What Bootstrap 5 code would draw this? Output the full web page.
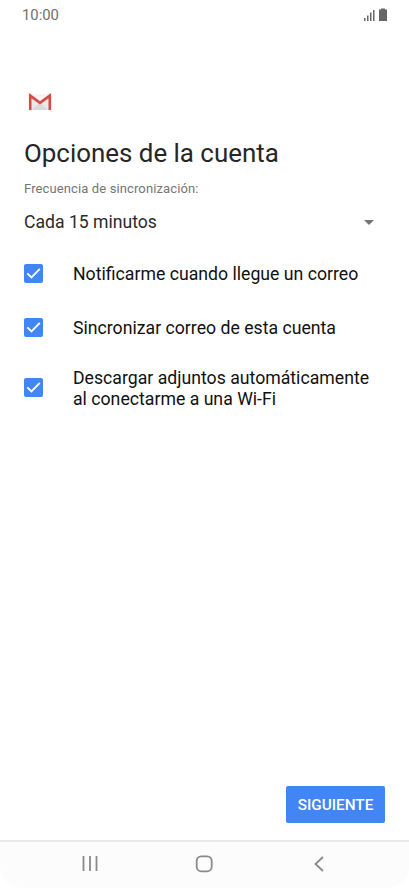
<!DOCTYPE html>
<html lang="es">
<head>
<meta charset="utf-8">
<meta name="viewport" content="width=device-width, initial-scale=1">
<title>Opciones de la cuenta</title>
<link href="https://cdn.jsdelivr.net/npm/bootstrap@5.3.0/dist/css/bootstrap.min.css" rel="stylesheet">
<style>
html,body{height:100%}
body{font-family:Roboto,sans-serif;color:#2b2b2b;background:#fff;overflow:hidden}
svg{display:block;flex:none}
.status-bar{height:30px;padding:0 21px 0 22px;color:#707070;font-size:14.8px}
.content{padding:63px 24px 0}
.page-title{font-size:25.9px;line-height:32px;margin:26px 0 0;font-weight:400;white-space:nowrap;color:#262626}
.caption-text{font-size:13px;letter-spacing:.12px;line-height:16px;color:#757575;margin-top:12px}
.frequency{font-size:17.6px;line-height:22px;margin-top:14px;padding-right:11px}
.option-list{margin-top:13px;font-size:17.68px;line-height:21px;color:#111}
.option{min-height:54px;gap:30px;white-space:nowrap}
.option span{padding-top:3px}
.option-tall{min-height:66px}
.option-tall span{padding-top:4px}
.btn-next,.btn-next:hover{background:#4285f4;color:#fff}
.btn-next{border:0;border-radius:2px;width:99px;height:37px;padding:2px 0 0;font-size:15.3px;font-weight:500;margin:0 24px 17px 0}
.system-nav{height:48px;border-top:2px solid #e8e8e8;background:#fcfcfc;border-radius:0 0 22px 22px}
</style>
</head>
<body class="d-flex flex-column">
<header class="status-bar d-flex justify-content-between align-items-center">
<span>10:00</span>
<svg width="25" height="14" viewBox="0 0 25 14" fill="#666"><path d="M1 10h1.500v3H1zM4 7.500h1.500V13H4zM7 4.500h1.500V13H7zM10 2h1.500v11H10zM17 1.500h1V.5h4v1h2V13h-8V1.500z"/></svg>
</header>
<main class="content flex-grow-1">
<svg class="ms-1" width="24" height="18" viewBox="0 0 24 18"><path fill="#e9e9e9" d="M1 1h22v16H1z"/><path fill="#dadada" d="M3 17l9-7 8 7z"/><path fill="#f4f4f4" d="M3 1h18l-9 7z"/><path fill="none" stroke="#d64c43" stroke-width="2.600" d="M2.200 17V2.600L12 9.800l9.800-7.200V17"/></svg>
<h1 class="page-title">Opciones de la cuenta</h1>
<div class="caption-text">Frecuencia de sincronización:</div>
<div class="frequency d-flex align-items-center justify-content-between"><span>Cada 15 minutos</span><svg width="10" height="5" viewBox="0 0 10 5"><path fill="#757575" d="M0 0h10L5 5z"/></svg></div>
<div class="option-list">
<div class="option d-flex align-items-center"><svg width="19" height="19" viewBox="0 0 19 19"><rect width="19" height="19" rx="2" fill="#4285f4"/><path d="M3.300 9.300l4.200 4.200 8.300-8.700" fill="none" stroke="#fff" stroke-width="1.900"/></svg><span>Notificarme cuando llegue un correo</span></div>
<div class="option d-flex align-items-center"><svg width="19" height="19" viewBox="0 0 19 19"><rect width="19" height="19" rx="2" fill="#4285f4"/><path d="M3.300 9.300l4.200 4.200 8.300-8.700" fill="none" stroke="#fff" stroke-width="1.900"/></svg><span>Sincronizar correo de esta cuenta</span></div>
<div class="option option-tall d-flex align-items-center"><svg width="19" height="19" viewBox="0 0 19 19"><rect width="19" height="19" rx="2" fill="#4285f4"/><path d="M3.300 9.300l4.200 4.200 8.300-8.700" fill="none" stroke="#fff" stroke-width="1.900"/></svg><span>Descargar adjuntos automáticamente<br>al conectarme a una Wi-Fi</span></div>
</div>
</main>
<div class="d-flex justify-content-end"><button class="btn btn-next" type="button">SIGUIENTE</button></div>
<nav class="system-nav d-flex justify-content-between align-items-center">
<svg width="409" height="46" viewBox="0 0 409 46" fill="none" stroke="#8a8a8a" stroke-width="1.800"><path d="M83.500 14v15M90 14v15M96.500 14v15M323 15l-7.500 7 7.500 7"/><rect x="196.700" y="14.300" width="15" height="15" rx="4.500"/></svg>
</nav>
<script src="https://cdn.jsdelivr.net/npm/bootstrap@5.3.0/dist/js/bootstrap.bundle.min.js"></script>
</body>
</html>
